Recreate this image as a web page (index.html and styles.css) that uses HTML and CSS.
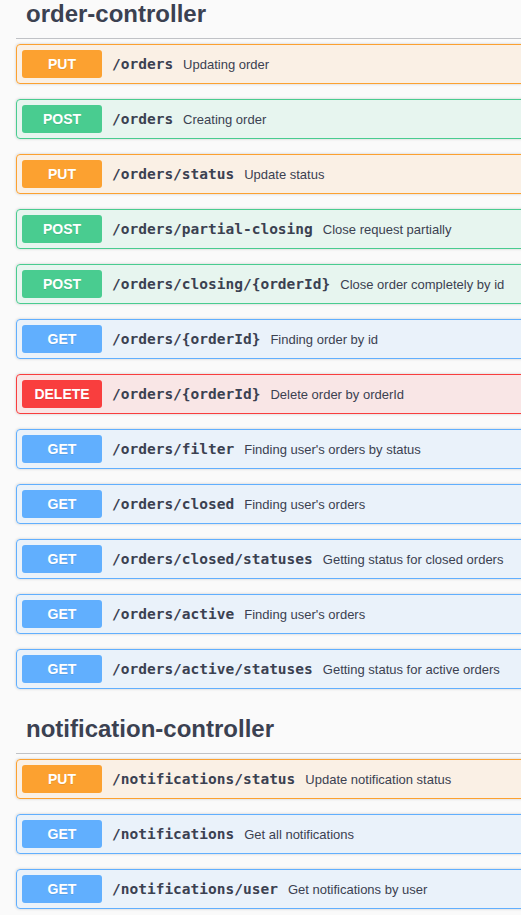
FILE: index.html
```html
<!DOCTYPE html>
<html lang="en">
<head>
<meta charset="utf-8">
<title>Swagger</title>
<link rel="stylesheet" href="styles.css">
</head>
<body>
<div class="wrapper">
  <section class="tag-section first">
    <h4 class="tag"><span>order-controller</span></h4>
    <div class="opblock put"><span class="method">PUT</span><span class="path">/orders</span><span class="desc">Updating order</span></div>
    <div class="opblock post"><span class="method">POST</span><span class="path">/orders</span><span class="desc">Creating order</span></div>
    <div class="opblock put"><span class="method">PUT</span><span class="path">/orders/status</span><span class="desc">Update status</span></div>
    <div class="opblock post"><span class="method">POST</span><span class="path">/orders/partial-closing</span><span class="desc">Close request partially</span></div>
    <div class="opblock post"><span class="method">POST</span><span class="path">/orders/closing/{orderId}</span><span class="desc">Close order completely by id</span></div>
    <div class="opblock get"><span class="method">GET</span><span class="path">/orders/{orderId}</span><span class="desc">Finding order by id</span></div>
    <div class="opblock delete"><span class="method">DELETE</span><span class="path">/orders/{orderId}</span><span class="desc">Delete order by orderId</span></div>
    <div class="opblock get"><span class="method">GET</span><span class="path">/orders/filter</span><span class="desc">Finding user's orders by status</span></div>
    <div class="opblock get"><span class="method">GET</span><span class="path">/orders/closed</span><span class="desc">Finding user's orders</span></div>
    <div class="opblock get"><span class="method">GET</span><span class="path">/orders/closed/statuses</span><span class="desc">Getting status for closed orders</span></div>
    <div class="opblock get"><span class="method">GET</span><span class="path">/orders/active</span><span class="desc">Finding user's orders</span></div>
    <div class="opblock get"><span class="method">GET</span><span class="path">/orders/active/statuses</span><span class="desc">Getting status for active orders</span></div>
  </section>
  <section class="tag-section">
    <h4 class="tag"><span>notification-controller</span></h4>
    <div class="opblock put"><span class="method">PUT</span><span class="path">/notifications/status</span><span class="desc">Update notification status</span></div>
    <div class="opblock get"><span class="method">GET</span><span class="path">/notifications</span><span class="desc">Get all notifications</span></div>
    <div class="opblock get"><span class="method">GET</span><span class="path">/notifications/user</span><span class="desc">Get notifications by user</span></div>
  </section>
</div>
</body>
</html>
```

FILE: styles.css
```css
html, body {
  margin: 0;
  padding: 0;
  overflow: hidden;
  background: #fafafa;
}

body {
  font-family: "Liberation Sans", Arial, sans-serif;
  color: #3b4151;
}

.wrapper {
  width: 620px;
  padding: 0 0 0 16px;
  box-sizing: border-box;
}

.tag-section {
  display: flex;
  flex-direction: column;
}

.tag-section.first {
  margin-top: -11px;
}

.tag {
  margin: 0 0 5px;
  padding: 10px 20px 10px 10px;
  font-size: 24px;
  line-height: 29px;
  font-weight: bold;
  color: #3b4151;
  border-bottom: 1px solid rgba(59, 65, 81, 0.3);
}

.opblock {
  display: flex;
  align-items: center;
  margin: 0 0 15px;
  padding: 5px;
  border: 1px solid;
  border-radius: 4px;
  box-shadow: 0 0 3px rgba(0, 0, 0, 0.19);
}

.method {
  flex: none;
  width: 80px;
  padding: 6px 0;
  line-height: 16px;
  font-size: 14px;
  font-weight: bold;
  text-align: center;
  color: #fff;
  border-radius: 3px;
  text-shadow: 0 1px 0 rgba(0, 0, 0, 0.1);
}

.path {
  padding: 0 10px;
  font-family: "DejaVu Sans Mono", "Liberation Mono", monospace;
  font-weight: bold;
  font-size: 14.5px;
  color: #3b4151;
  white-space: nowrap;
}

.desc {
  font-size: 13px;
  color: #3b4151;
  white-space: nowrap;
}

.put { background: rgba(252, 161, 48, 0.1); border-color: #fca130; }
.put .method { background: #fca130; }

.post { background: rgba(73, 204, 144, 0.1); border-color: #49cc90; }
.post .method { background: #49cc90; }

.get { background: rgba(97, 175, 254, 0.1); border-color: #61affe; }
.get .method { background: #61affe; }

.delete { background: rgba(249, 62, 62, 0.1); border-color: #f93e3e; }
.delete .method { background: #f93e3e; }
```
